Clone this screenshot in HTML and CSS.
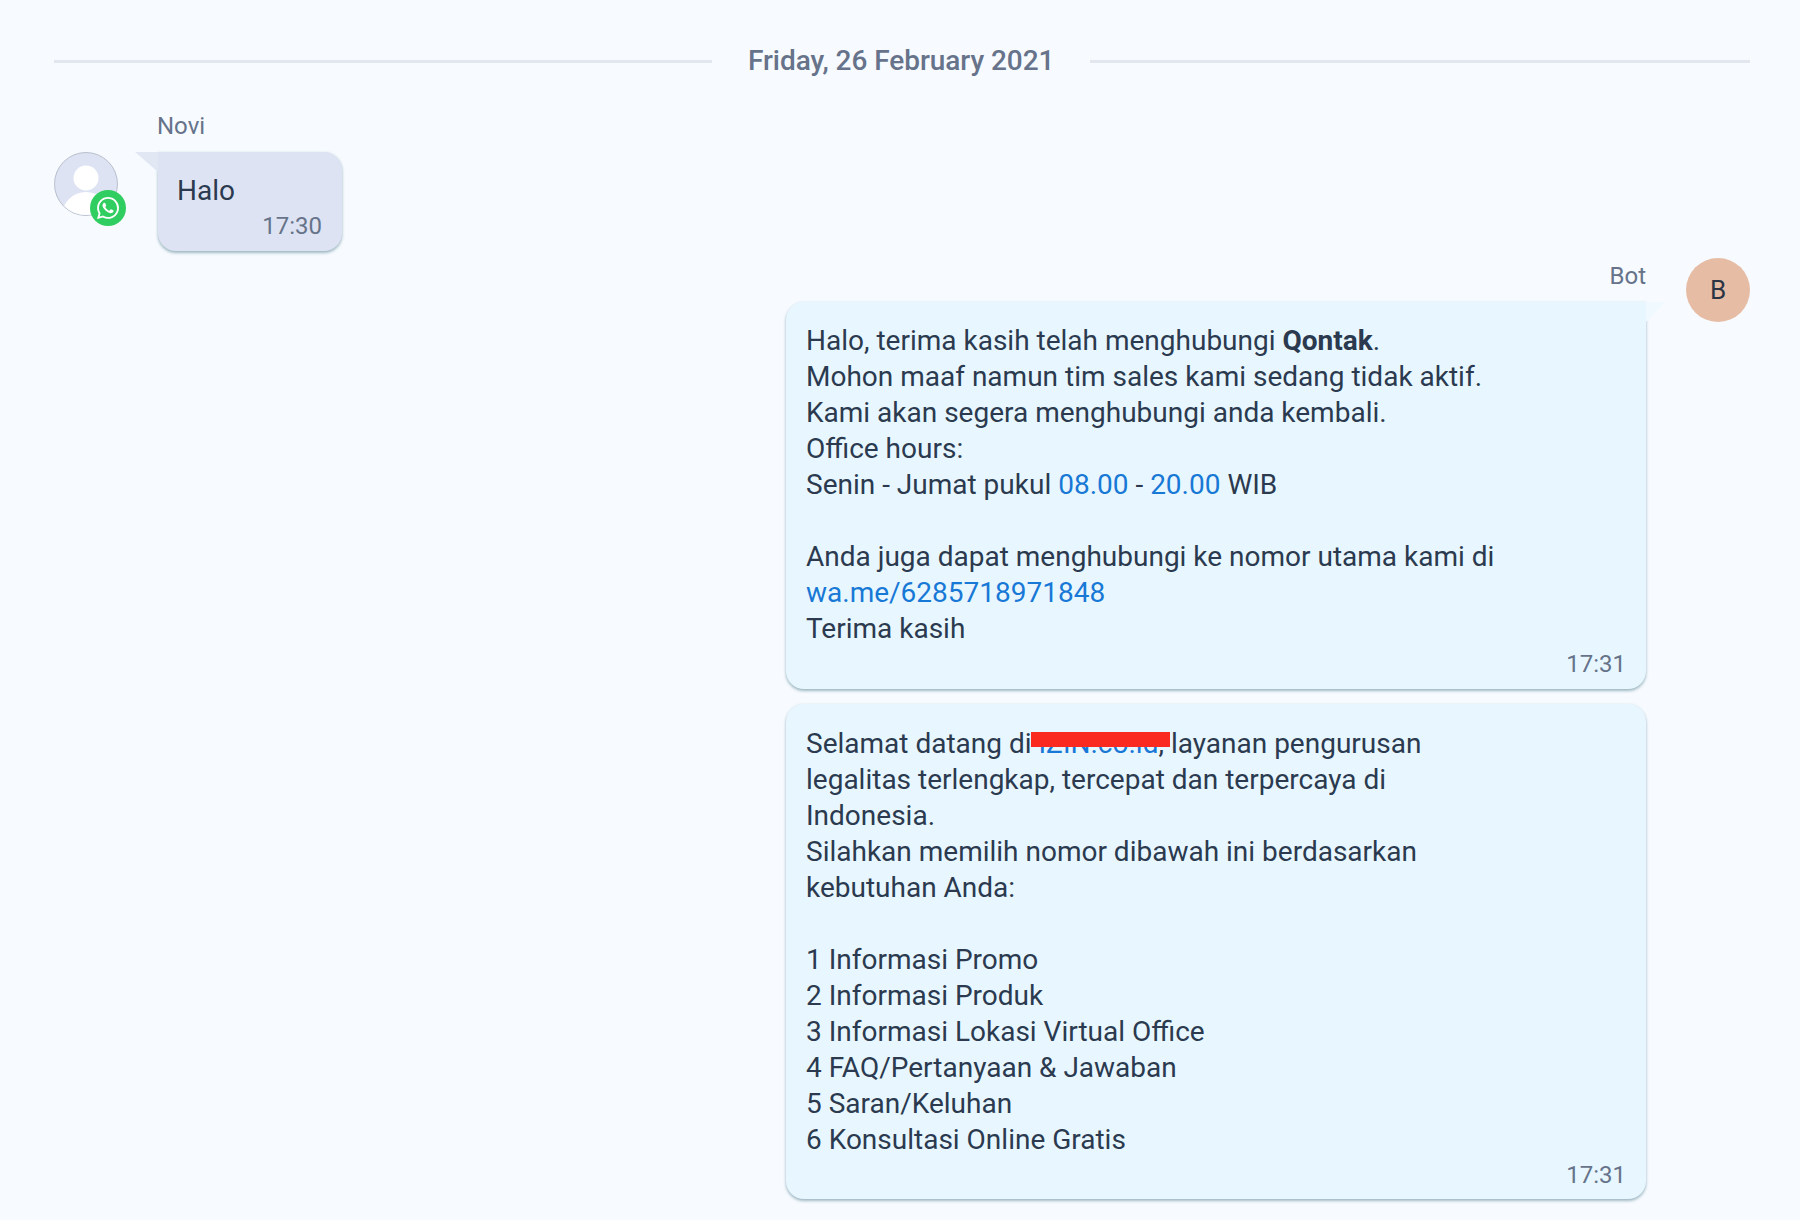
FILE: index.html
```html
<!DOCTYPE html>
<html lang="id">
<head>
<meta charset="utf-8">
<title>Chat</title>
<link rel="stylesheet" href="styles.css">
</head>
<body>
<main class="chat">
  <div class="date-divider"><span class="date-text">Friday, 26 February 2021</span></div>

  <section class="group incoming">
    <div class="avatar-wrap">
      <svg class="avatar-user" viewBox="0 0 64 64" aria-hidden="true">
        <circle class="avatar-bg" cx="32" cy="32" r="31.5"/>
        <clipPath id="avatar-clip"><circle cx="32" cy="32" r="31"/></clipPath>
        <g clip-path="url(#avatar-clip)" fill="#fff">
          <circle cx="32" cy="26" r="12.5"/>
          <ellipse cx="32" cy="64" rx="24" ry="24"/>
        </g>
      </svg>
      <span class="badge">
        <svg viewBox="0 0 24 24" aria-hidden="true"><path fill="#fff" d="M17.472 14.382c-.297-.149-1.758-.867-2.03-.967-.273-.099-.471-.148-.67.15-.197.297-.767.966-.94 1.164-.173.199-.347.223-.644.075-.297-.15-1.255-.463-2.39-1.475-.883-.788-1.48-1.761-1.653-2.059-.173-.297-.018-.458.13-.606.134-.133.298-.347.446-.52.149-.174.198-.298.298-.497.099-.198.05-.371-.025-.52-.075-.149-.669-1.612-.916-2.207-.242-.579-.487-.5-.669-.51-.173-.008-.371-.01-.57-.01-.198 0-.52.074-.792.372-.272.297-1.04 1.016-1.04 2.479 0 1.462 1.065 2.875 1.213 3.074.149.198 2.096 3.2 5.077 4.487.709.306 1.262.489 1.694.625.712.227 1.36.195 1.871.118.571-.085 1.758-.719 2.006-1.413.248-.694.248-1.289.173-1.413-.074-.124-.272-.198-.57-.347m-5.421 7.403h-.004a9.87 9.87 0 01-5.031-1.378l-.361-.214-3.741.982.998-3.648-.235-.374a9.86 9.86 0 01-1.51-5.26c.001-5.45 4.436-9.884 9.888-9.884 2.64 0 5.122 1.03 6.988 2.898a9.825 9.825 0 012.893 6.994c-.003 5.45-4.437 9.884-9.885 9.884m8.413-18.297A11.815 11.815 0 0012.05 0C5.495 0 .16 5.335.157 11.892c0 2.096.547 4.142 1.588 5.945L.057 24l6.305-1.654a11.882 11.882 0 005.683 1.448h.005c6.554 0 11.89-5.335 11.893-11.893a11.821 11.821 0 00-3.48-8.413Z"/></svg>
      </span>
    </div>
    <div class="stack">
      <div class="name">Novi</div>
      <div class="bubble bubble-in">
        <p class="msg">Halo</p>
        <div class="time">17:30</div>
      </div>
    </div>
  </section>

  <section class="group outgoing">
    <div class="stack">
      <div class="name">Bot</div>
      <div class="bubble bubble-out">
        <p class="msg">Halo, terima kasih telah menghubungi <strong>Qontak</strong>.<br>
Mohon maaf namun tim sales kami sedang tidak aktif.<br>
Kami akan segera menghubungi anda kembali.<br>
Office hours:<br>
Senin - Jumat pukul <a class="link" href="#">08.00</a> - <a class="link" href="#">20.00</a> WIB<br>
<br>
Anda juga dapat menghubungi ke nomor utama kami di<br>
<a class="link" href="#">wa.me/6285718971848</a><br>
Terima kasih</p>
        <div class="time">17:31</div>
      </div>
      <div class="bubble bubble-next">
        <p class="msg">Selamat datang di <a class="link redacted" href="#">IZIN.co.id</a>, layanan pengurusan<br>
legalitas terlengkap, tercepat dan terpercaya di<br>
Indonesia.<br>
Silahkan memilih nomor dibawah ini berdasarkan<br>
kebutuhan Anda:<br>
<br>
1 Informasi Promo<br>
2 Informasi Produk<br>
3 Informasi Lokasi Virtual Office<br>
4 FAQ/Pertanyaan &amp; Jawaban<br>
5 Saran/Keluhan<br>
6 Konsultasi Online Gratis</p>
        <div class="time">17:31</div>
      </div>
    </div>
    <div class="avatar-letter">B</div>
  </section>
</main>
</body>
</html>
```
FILE: styles.css
```css
* { box-sizing: border-box; }
html, body { margin: 0; height: 100%; }
body {
  background: #f7fbff;
  color: #2b3a4f;
  font-family: Roboto, "Liberation Sans", sans-serif;
  overflow: hidden;
}
.chat { padding: 40px 50px 0 54px; }
.date-divider {
  display: grid;
  grid-template-columns: 658px auto 1fr;
  align-items: center;
  column-gap: 36px;
  height: 42px;
  color: #66738a;
  font-size: 28px;
  font-weight: 500;
}
.date-text {
  letter-spacing: -0.05px;
  margin-top: -2px;
}
.date-divider::before, .date-divider::after {
  content: "";
  height: 3px;
  background: #e1e6ef;
}
.group { display: flex; }
.incoming { margin-top: 26px; gap: 39px; }
.outgoing { margin-top: 7px; justify-content: flex-end; gap: 40px; }
.stack { display: flex; flex-direction: column; }
.incoming .stack { align-items: flex-start; }
.outgoing .stack { align-items: flex-end; }
.name {
  height: 44px;
  color: #66738a;
  font-size: 24px;
  line-height: 36px;
}
.avatar-wrap { position: relative; width: 64px; height: 64px; margin-top: 44px; }
.avatar-user { display: block; width: 64px; height: 64px; }
.avatar-bg { fill: #dde3f2; stroke: #b9c0cd; stroke-width: 1; }
.badge {
  position: absolute;
  left: 36px;
  top: 38px;
  width: 36px;
  height: 36px;
  border-radius: 50%;
  background: #30cd60;
  display: flex;
  align-items: center;
  justify-content: center;
}
.badge svg { width: 22px; height: 22px; }
.avatar-letter {
  width: 64px;
  height: 64px;
  border-radius: 50%;
  background: #e6bda4;
  color: #2c3444;
  font-size: 26px;
  display: flex;
  align-items: center;
  justify-content: center;
}
.bubble {
  position: relative;
  padding: 21px 20px 8px;
  box-shadow: 0 2px 3px rgba(95, 135, 150, .55), 0 0 3px rgba(140, 170, 190, .18);
}
.bubble-in {
  width: 184px;
  margin-left: 1px;
  padding-left: 19px;
  background: #dde3f2;
  border-radius: 0 18px 18px 18px;
}
.bubble-in::before {
  content: "";
  position: absolute;
  top: 0;
  left: -23px;
  width: 23px;
  height: 20px;
  background: #e2e7f4;
  clip-path: polygon(0 0, 100% 0, 100% 100%);
}
.bubble-out, .bubble-next { width: 860px; background: #e8f7ff; }
.bubble-out { border-radius: 18px 0 18px 18px; }
.bubble-out::before {
  content: "";
  position: absolute;
  top: 0;
  right: -19px;
  width: 19px;
  height: 20px;
  background: #f0f9ff;
  clip-path: polygon(0 0, 100% 0, 0 100%);
}
.bubble-next {
  margin-top: 15px;
  padding-top: 22px;
  padding-bottom: 7px;
  border-radius: 18px;
}
.msg { margin: 0; font-size: 28px; line-height: 36px; }
.link { color: #1878d6; text-decoration: none; }
.redacted { position: relative; }
.redacted::after {
  content: "";
  position: absolute;
  left: -8px;
  right: -12px;
  top: 5px;
  height: 15px;
  background: #fb2a20;
}
.msg strong { font-weight: 700; }
.time {
  text-align: right;
  color: #66738a;
  font-size: 24px;
  line-height: 34px;
}
```
